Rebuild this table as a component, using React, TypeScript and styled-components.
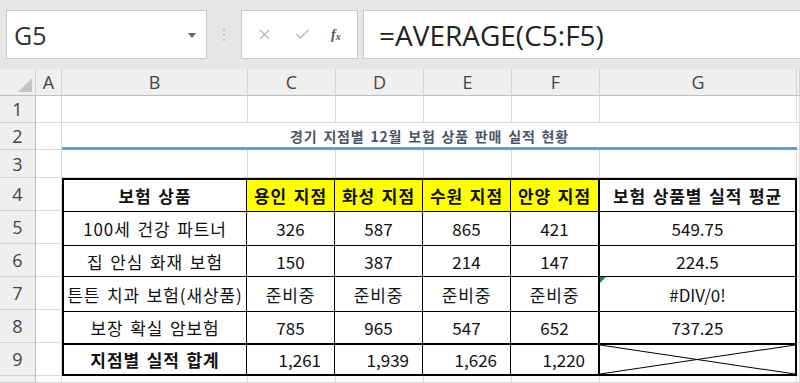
import React from "react";
import styled, { createGlobalStyle, css } from "styled-components";
import { X, Check } from "lucide-react";

const GlobalStyle = createGlobalStyle`
  html, body {
    margin: 0;
    padding: 0;
    background: #ffffff;
    overflow: hidden;
  }
  body {
    font-family: "Noto Sans CJK KR", "Noto Sans", sans-serif;
  }
`;

const CELL_FONT = `"Noto Sans CJK KR", "Noto Sans", sans-serif`;
const UI_FONT = `"Open Sans", "Noto Sans", sans-serif`;

const COLS = "36px 26px 186px 88px 88px 88px 88px 197px 1fr";

const Window = styled.div`
  width: 800px;
  height: 383px;
  display: flex;
  flex-direction: column;
  overflow: hidden;
`;

/* ---------- formula bar ---------- */

const Toolbar = styled.div`
  height: 69px;
  flex: none;
  background: #e6e6e6;
  display: flex;
  align-items: center;
  padding: 0 0 0 6px;
  box-sizing: border-box;
`;

const Box = styled.div<{ $w?: number }>`
  height: 49px;
  box-sizing: border-box;
  background: #ffffff;
  border: 1px solid #c9c9c9;
  display: flex;
  align-items: center;
  ${(p) =>
    p.$w
      ? css`
          width: ${p.$w}px;
          flex: none;
        `
      : css`
          flex: 1;
        `}
`;

const NameBox = styled(Box)`
  justify-content: space-between;
  padding: 0 10px 0 7px;
  font-family: ${UI_FONT};
  font-size: 25px;
  color: #333;
`;

const Caret = styled.span`
  width: 0;
  height: 0;
  border-left: 4px solid transparent;
  border-right: 4px solid transparent;
  border-top: 5px solid #666;
  margin-top: 2px;
`;

const Grip = styled.div`
  width: 34px;
  flex: none;
  display: flex;
  flex-direction: column;
  align-items: center;
  gap: 3px;
  span {
    width: 2px;
    height: 2px;
    background: #b5b5b5;
    border-radius: 50%;
  }
`;

const FxBox = styled(Box)`
  justify-content: space-around;
  padding: 0 6px 0 4px;
  color: #b7b7b7;
  margin-right: 5px;
`;

const Fx = styled.span`
  font-family: "Liberation Serif", "DejaVu Serif", serif;
  font-style: italic;
  font-weight: bold;
  font-size: 14px;
  color: #555;
  sub {
    font-size: 10px;
    vertical-align: -1px;
  }
`;

const FormulaBox = styled(Box)`
  border-right: none;
  padding-left: 15px;
  font-family: ${UI_FONT};
  font-size: 28px;
  color: #222;
`;

/* ---------- sheet ---------- */

const Sheet = styled.div`
  flex: 1;
  display: grid;
  grid-template-columns: ${COLS};
  grid-template-rows: 27px 27px 27px 28px repeat(6, 33px) 1fr;
  background: #ffffff;
`;

const Corner = styled.div`
  background: #efefef;
  border-right: 1px solid #cfcfcf;
  border-bottom: 1px solid #bdbdbd;
  position: relative;
  &::after {
    content: "";
    position: absolute;
    right: 3px;
    bottom: 3px;
    border-left: 14px solid transparent;
    border-bottom: 14px solid #c3c3c3;
  }
`;

const ColHead = styled.div`
  background: #efefef;
  border-right: 1px solid #d2d2d2;
  border-bottom: 1px solid #bdbdbd;
  display: flex;
  align-items: center;
  justify-content: center;
  font-family: ${UI_FONT};
  font-size: 18px;
  color: #444;
`;

const RowHead = styled.div`
  background: #efefef;
  border-right: 1px solid #bdbdbd;
  border-bottom: 1px solid #d2d2d2;
  display: flex;
  align-items: center;
  justify-content: center;
  font-family: ${UI_FONT};
  font-size: 18px;
  color: #444;
`;

const Cell = styled.div`
  border-right: 1px solid #dadada;
  border-bottom: 1px solid #dadada;
`;

const Title = styled.div`
  grid-column: 3 / 9;
  border-bottom: 3px solid #6d9ecb;
  display: flex;
  align-items: center;
  justify-content: center;
  padding-top: 2px;
  font-family: ${CELL_FONT};
  font-weight: 700;
  font-size: 14px;
  letter-spacing: 0.8px;
  word-spacing: 2px;
  color: #4a5668;
`;

const Table = styled.div`
  grid-column: 3 / 9;
  grid-row: 5 / 11;
  border: 2px solid #000;
  display: grid;
  grid-template-columns: 183px 88px 88px 88px 88px 1fr;
  grid-template-rows: 32px 34px 31px 35px 32px 1fr;
  font-family: ${CELL_FONT};
  font-size: 17px;
  color: #111;
`;

type TdProps = {
  $bold?: boolean;
  $yellow?: boolean;
  $right?: boolean;
  $wide?: boolean;
  $lastCol?: boolean;
  $lastRow?: boolean;
  $thickLeft?: boolean;
  $thickTop?: boolean;
};

const Td = styled.div<TdProps>`
  position: relative;
  display: flex;
  align-items: center;
  justify-content: ${(p) => (p.$right ? "flex-end" : "center")};
  padding-right: ${(p) => (p.$right ? "13px" : "0")};
  white-space: nowrap;
  letter-spacing: ${(p) => (p.$wide ? "0.9px" : "0")};
  word-spacing: ${(p) => (p.$wide ? "2px" : "0")};
  font-weight: ${(p) => (p.$bold ? 700 : 400)};
  background: ${(p) => (p.$yellow ? "#ffff00" : "#ffffff")};
  border-right: ${(p) => (p.$lastCol ? "none" : "1px solid #000")};
  border-bottom: ${(p) => (p.$lastRow ? "none" : "1px solid #000")};
  border-left: ${(p) => (p.$thickLeft ? "1px solid #000" : "none")};
  border-top: ${(p) => (p.$thickTop ? "1px solid #000" : "none")};
`;

const ErrorMark = styled.span`
  position: absolute;
  left: 0;
  top: 0;
  border-top: 6px solid #1f8a3c;
  border-right: 6px solid transparent;
`;

const Cross = styled.svg`
  position: absolute;
  inset: 0;
  width: 100%;
  height: 100%;
`;

const cols = ["A", "B", "C", "D", "E", "F", "G", ""];

type Row = {
  name: string;
  vals: string[];
  avg: string;
};

const rows: Row[] = [
  { name: "100세 건강 파트너", vals: ["326", "587", "865", "421"], avg: "549.75" },
  { name: "집 안심 화재 보험", vals: ["150", "387", "214", "147"], avg: "224.5" },
  { name: "튼튼 치과 보험(새상품)", vals: ["준비중", "준비중", "준비중", "준비중"], avg: "#DIV/0!" },
  { name: "보장 확실 암보험", vals: ["785", "965", "547", "652"], avg: "737.25" },
];

const totals = ["1,261", "1,939", "1,626", "1,220"];
const branches = ["용인 지점", "화성 지점", "수원 지점", "안양 지점"];

export default function App() {
  return (
    <Window>
      <GlobalStyle />
      <Toolbar>
        <NameBox $w={201}>
          <span>G5</span>
          <Caret />
        </NameBox>
        <Grip>
          <span />
          <span />
          <span />
        </Grip>
        <FxBox $w={117}>
          <X size={17} strokeWidth={1.6} />
          <Check size={17} strokeWidth={1.8} />
          <Fx>
            f<sub>x</sub>
          </Fx>
        </FxBox>
        <FormulaBox>=AVERAGE(C5:F5)</FormulaBox>
      </Toolbar>

      <Sheet>
        <Corner />
        {cols.map((c, i) => (
          <ColHead key={i}>{c}</ColHead>
        ))}

        {[1, 2, 3].map((r) => (
          <React.Fragment key={r}>
            <RowHead>{r}</RowHead>
            <Cell />
            {r === 2 ? (
              <Title>경기 지점별 12월 보험 상품 판매 실적 현황</Title>
            ) : (
              [0, 1, 2, 3, 4, 5].map((k) => <Cell key={k} />)
            )}
            <Cell />
          </React.Fragment>
        ))}

        {[4, 5, 6, 7, 8, 9].map((r) => (
          <React.Fragment key={r}>
            <RowHead style={{ gridColumn: 1, gridRow: r + 1 }}>{r}</RowHead>
            <Cell style={{ gridColumn: 2, gridRow: r + 1 }} />
            <Cell style={{ gridColumn: 9, gridRow: r + 1 }} />
          </React.Fragment>
        ))}

        <Table>
          <Td $bold $wide>보험 상품</Td>
          {branches.map((b) => (
            <Td key={b} $bold $yellow $wide>
              {b}
            </Td>
          ))}
          <Td $bold $wide $lastCol $thickLeft>
            보험 상품별 실적 평균
          </Td>

          {rows.map((row, ri) => (
            <React.Fragment key={row.name}>
              <Td $wide>{row.name}</Td>
              {row.vals.map((v, vi) => (
                <Td key={vi} $wide={ri === 2}>
                  {v}
                </Td>
              ))}
              <Td $lastCol $thickLeft>
                {ri === 2 && <ErrorMark />}
                {row.avg}
              </Td>
            </React.Fragment>
          ))}

          <Td $bold $wide $lastRow $thickTop>
            지점별 실적 합계
          </Td>
          {totals.map((t) => (
            <Td key={t} $right $lastRow $thickTop>
              {t}
            </Td>
          ))}
          <Td $lastRow $lastCol $thickLeft $thickTop>
            <Cross viewBox="0 0 100 100" preserveAspectRatio="none">
              <line x1="0" y1="0" x2="100" y2="100" stroke="#000" strokeWidth="1" vectorEffect="non-scaling-stroke" />
              <line x1="0" y1="100" x2="100" y2="0" stroke="#000" strokeWidth="1" vectorEffect="non-scaling-stroke" />
            </Cross>
          </Td>
        </Table>

        <RowHead style={{ gridColumn: 1, gridRow: 11 }} />
        {[2, 3, 4, 5, 6, 7, 8, 9].map((c) => (
          <Cell key={c} style={{ gridColumn: c, gridRow: 11 }} />
        ))}
      </Sheet>
    </Window>
  );
}
